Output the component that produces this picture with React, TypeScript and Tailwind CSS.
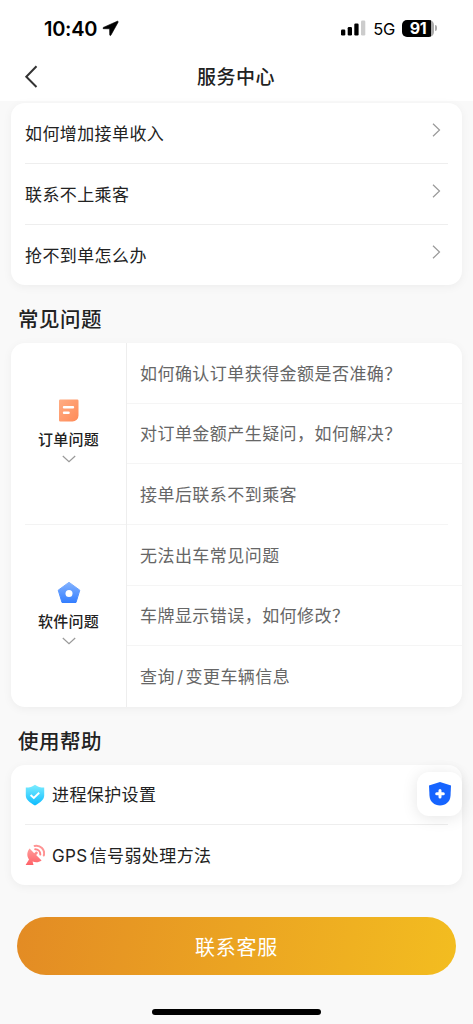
import { ReactNode } from "react";

const guides = ["如何增加接单收入", "联系不上乘客", "抢不到单怎么办"];

const faqGroups = [
  {
    title: "订单问题",
    icon: <OrderIcon />,
    questions: ["如何确认订单获得金额是否准确？", "对订单金额产生疑问，如何解决？", "接单后联系不到乘客"],
  },
  {
    title: "软件问题",
    icon: <SoftwareIcon />,
    questions: [
      "无法出车常见问题",
      "车牌显示错误，如何修改？",
      <span key="vehicle">
        查询<span className="mx-[2px]">/</span>变更车辆信息
      </span>,
    ],
  },
];

function OrderIcon() {
  return (
    <svg width="20" height="23" viewBox="0 0 20 23">
      <defs>
        <linearGradient id="order" x1="0" y1="0" x2="1" y2="1">
          <stop offset="0" stopColor="#ffad84" />
          <stop offset="1" stopColor="#ff8a57" />
        </linearGradient>
      </defs>
      <path d="M1.2 .5h17.1a1.2 1.2 0 0 1 1.2 1.2v14.8a6 6 0 0 1-6 6H1.2A1.2 1.2 0 0 1 0 21.3V1.7A1.2 1.2 0 0 1 1.2.5Z" fill="url(#order)" />
      <path d="M5 8.200h9M5 13.700h4.600" stroke="#fff" strokeWidth="2.400" strokeLinecap="round" />
    </svg>
  );
}

function SoftwareIcon() {
  return (
    <svg width="24" height="23" viewBox="0 0 24 23">
      <defs>
        <linearGradient id="software" x1="0" y1="0" x2="0" y2="1">
          <stop offset="0" stopColor="#83b2ff" />
          <stop offset="1" stopColor="#357fff" />
        </linearGradient>
      </defs>
      <path d="M12 1.3 22.8 9.2 19 21.5H5L1.2 9.2Z" fill="url(#software)" stroke="url(#software)" strokeWidth="1" strokeLinejoin="round" />
      <circle cx="12" cy="12.4" r="3.5" fill="#fff" />
    </svg>
  );
}

function CheckShieldIcon() {
  return (
    <svg width="20" height="22" viewBox="0 0 20 22">
      <defs>
        <linearGradient id="shield" x1="0" y1="0" x2="0" y2="1">
          <stop offset="0" stopColor="#7cecff" />
          <stop offset="1" stopColor="#0cbcff" />
        </linearGradient>
      </defs>
      <path d="M10 .8c2.700 2 5.300 2.800 9.200 2.800v7.900c0 4.400-4.200 7.200-9.200 9.900-5-2.700-9.200-5.500-9.200-9.900V3.600C4.700 3.600 7.300 2.800 10 .8Z" fill="url(#shield)" />
      <path d="m5.600 11 3.200 3 5.400-5.300" fill="none" stroke="#fff" strokeWidth="1.900" />
    </svg>
  );
}

function DishIcon() {
  return (
    <svg width="20" height="22" viewBox="0 0 20 22">
      <defs>
        <linearGradient id="dish" x1="0" y1="0" x2="0" y2="1">
          <stop offset="0" stopColor="#ff9c9a" />
          <stop offset="1" stopColor="#ff6268" />
        </linearGradient>
      </defs>
      <path d="M4.600 4.600 9.200 9.200l1.500-1.500c1-1 2.900.7 1.900 1.900l-1.500 1.500 5.500 5.400c-2.800 2-6 2.300-9 1l.9 3.500H.6l3.400-5.500C1.500 12.100 1.900 7.700 4.600 4.600Z" fill="url(#dish)" />
      <path d="M10.200 5.300c2.900 0 5.100 2.200 5.100 5.100" fill="none" stroke="#ff8587" strokeWidth="2" strokeLinecap="round" />
      <path d="M9.600 1.900c5.700-1.200 10.800 3.600 9.200 9.600" fill="none" stroke="#ff9494" strokeWidth="2" strokeLinecap="round" />
    </svg>
  );
}

function StatusBar() {
  return (
    <div className="flex h-[53px] justify-between pt-[3px] pr-[36px] pl-[44px] font-[Inter] text-black">
      <div className="flex items-center gap-[5px]">
        <span className="pt-px text-[20px] font-semibold tracking-[-0.3px]">10:40</span>
        <svg width="17" height="17" viewBox="0 0 17 17">
          <path d="M15.200 1.300 1.400 7.400c-.7.300-.5 1.300.2 1.300l6 .1.100 6c0 .8 1 1 1.300.2L16.100 2.200c.3-.7-.2-1.200-.9-.9Z" stroke="#000" strokeWidth=".6" />
        </svg>
      </div>
      <div className="flex items-center">
        <svg width="25" height="16" viewBox="0 0 25 16">
          <rect x="0" y="9.500" width="4.300" height="6" rx="1.200" />
          <rect x="6.700" y="7" width="4.300" height="8.500" rx="1.200" />
          <rect x="13.300" y="3.500" width="4.300" height="12" rx="1.200" />
          <rect x="20" y=".5" width="4.300" height="15" rx="1.200" fill="#ccc" />
        </svg>
        <span className="ml-[7px] pt-[2px] text-[16.500px] tracking-[-0.3px]">5G</span>
        <div className="ml-[7px] flex h-[17px] w-[32px] items-center justify-center rounded-[5px] bg-[linear-gradient(90deg,#000_91%,#aaa_91%)] text-[16px] leading-[17px] font-bold tracking-[-0.3px] text-white">
          91
        </div>
        <div className="ml-px h-[6px] w-[2px] rounded-r-full bg-[#aaa]" />
      </div>
    </div>
  );
}

function Card({ className = "", children }: { className?: string; children: ReactNode }) {
  return <div className={`mx-[11px] rounded-[14px] bg-white shadow-[0_2px_10px_rgba(0,0,0,0.05)] ${className}`}>{children}</div>;
}

function SectionTitle({ children }: { children: ReactNode }) {
  return <h2 className="flex h-[58px] items-center pt-[12px] pl-[18px] text-[20.500px] font-medium tracking-[0.500px]">{children}</h2>;
}

export default function App() {
  return (
    <div className="flex h-[1024px] w-[473px] flex-col overflow-hidden bg-[#f9f9f9] font-[Inter,'Noto_Sans_CJK_SC',sans-serif] text-[#222]">
      <header className="h-[101px] shrink-0 bg-white">
        <StatusBar />
        <div className="grid h-[48px] grid-cols-[1fr_auto_1fr] items-center">
          <svg className="ml-[24px]" width="15" height="24" viewBox="0 0 15 24">
            <path d="M12.500 1.300 2.300 11.700l10.200 10.300" fill="none" stroke="#333" strokeWidth="2" />
          </svg>
          <h1 className="pt-[2px] pr-px text-[19px] font-medium tracking-[0.500px]">服务中心</h1>
        </div>
      </header>

      <Card className="mt-[2px] shrink-0 px-[14px]">
        {guides.map((guide, index) => (
          <div
            key={guide}
            className={`flex items-center justify-between pr-[7px] text-[17px] tracking-[0.400px] ${index < 2 ? "h-[61px] border-b border-[#eee]" : "h-[60px]"}`}
          >
            <span className="pt-[4px]">{guide}</span>
            <svg className="mb-[7px]" width="9" height="14" viewBox="0 0 9 14">
              <path d="m1 .7 6.500 6.300L1 13.300" fill="none" stroke="#999" strokeWidth="1.200" />
            </svg>
          </div>
        ))}
      </Card>

      <SectionTitle>常见问题</SectionTitle>
      <Card className="shrink-0">
        {faqGroups.map((group, groupIndex) => (
          <div key={group.title} className="flex h-[182px]">
            <div className="w-[116px] border-r border-[#eee] pl-[14px]">
              <div className={`flex h-full flex-col items-center pt-[56px] pr-[14px] ${groupIndex === 0 ? "border-b border-[#f3f3f3]" : ""}`}>
                {group.icon}
                <span className="mt-[7px] text-[15px] leading-[22px] font-medium tracking-[0.200px]">{group.title}</span>
                <svg className="mt-[4px]" width="14" height="8" viewBox="0 0 14 8">
                  <path d="m.8 1 6.200 5.800L13.200 1" fill="none" stroke="#999" strokeWidth="1.200" />
                </svg>
              </div>
            </div>
            <div className="grid flex-1 grid-rows-3">
              {group.questions.map((question, index) => (
                <div
                  key={index}
                  className={`flex items-center pt-[3px] pl-[13px] text-[17px] tracking-[0.450px] text-[#666] ${
                    index < 2 ? "border-b border-[#f5f5f5]" : groupIndex === 0 ? "mr-[14px] border-b border-[#f5f5f5]" : ""
                  }`}
                >
                  {question}
                </div>
              ))}
            </div>
          </div>
        ))}
      </Card>

      <SectionTitle>使用帮助</SectionTitle>
      <Card className="relative shrink-0 px-[14px]">
        <div className="flex h-[60px] items-center gap-[7px] border-b border-[#eee] text-[17px] tracking-[0.400px]">
          <CheckShieldIcon />
          <span className="pt-[3px]">进程保护设置</span>
        </div>
        <div className="flex h-[60px] items-center gap-[7px] text-[17px] tracking-[0.400px]">
          <DishIcon />
          <span className="pt-[3px]">
            <span className="mr-[2px]">GPS</span>信号弱处理方法
          </span>
        </div>
        {/* floating safety entry */}
        <button className="absolute top-[7px] right-0 flex h-[44px] w-[45px] items-center justify-center rounded-[12px] bg-white shadow-[0_2px_16px_rgba(0,0,0,0.1)]">
          <svg width="24" height="24" viewBox="0 0 24 24">
            <path d="M12 0 23 3.400 22.500 14c-.4 5.800-4.800 9.400-10.500 9.400S1.900 19.800 1.500 14L1 3.400Z" fill="#1664ff" />
            <path d="M12 8.500v6.600M8.700 11.800h6.600" stroke="#fff" strokeWidth="3" strokeLinecap="round" />
          </svg>
        </button>
      </Card>

      <button className="mx-[17px] mt-[32px] h-[58px] shrink-0 rounded-full bg-[linear-gradient(100deg,#e38b24,#f3bd20)] pt-[3px] text-[20px] tracking-[0.800px] text-white">
        联系客服
      </button>
      <div className="mx-auto mt-[34px] h-[6px] w-[169px] shrink-0 rounded-full bg-black" />
    </div>
  );
}
